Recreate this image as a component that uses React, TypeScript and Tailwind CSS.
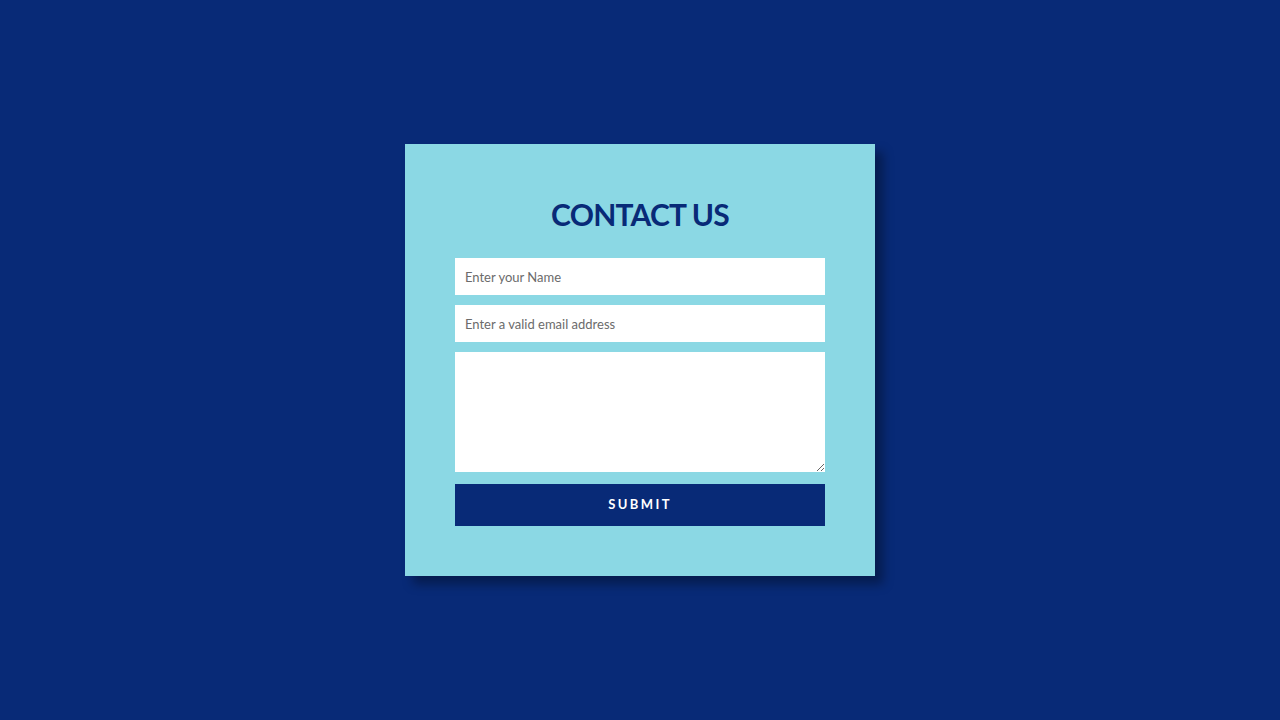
import React from "react";

export default function App() {
  return (
    <div
      className="w-full h-[720px] bg-[#082a77] flex items-center justify-center"
      style={{ fontFamily: "Lato, 'Open Sans', sans-serif" }}
    >
      <div className="w-[470px] h-[432px] bg-[#8bd8e4] px-[50px] pt-[50px] shadow-[8px_8px_10px_rgba(0,0,0,0.35)] flex flex-col">
        <h1 className="text-[30px] leading-[40px] font-bold text-[#082a77] text-center mb-[24px] tracking-[-0.8px]">
          CONTACT US
        </h1>
        <input
          className="w-full h-[37px] bg-white px-[10px] text-[13px] text-gray-700 placeholder:text-[#6b6b6b] outline-none mb-[10px]"
          placeholder="Enter your Name"
        />
        <input
          className="w-full h-[37px] bg-white px-[10px] text-[13px] text-gray-700 placeholder:text-[#6b6b6b] outline-none mb-[10px]"
          placeholder="Enter a valid email address"
        />
        <textarea className="w-full h-[120px] bg-white p-[10px] text-[13px] outline-none block" />
        <button className="mt-[12px] w-full h-[42px] bg-[#082a77] text-white text-[13px] font-bold tracking-[2.4px]">
          SUBMIT
        </button>
      </div>
    </div>
  );
}
